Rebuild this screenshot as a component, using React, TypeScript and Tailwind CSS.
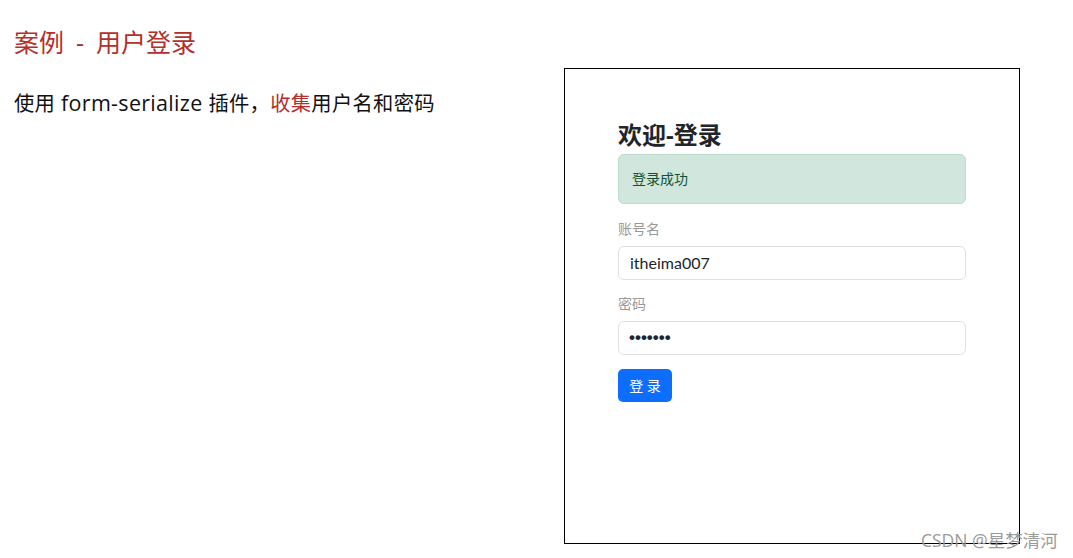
import React from "react";

const App = () => {
  return (
    <div className="relative h-[558px] w-[1073px] overflow-hidden bg-white font-['Open_Sans','Noto_Sans_CJK_SC',sans-serif]">
      <div className="flex">
        {/* left: task description */}
        <div className="w-[564px] shrink-0 pl-[14px]">
          <h1 className="pt-[26px] text-[25px] leading-[32px] text-[#b3302b]">
            案例<span className="mx-[12px]">-</span>用户登录
          </h1>
          <p className="mt-[31px] text-[20.3px] leading-[28px] tracking-[0.3px] text-[#111]">
            使用<span className="text-[21.5px]"> form-serialize </span>插件，<span className="text-[#b3302b]">收集</span>用户名和密码
          </p>
        </div>

        {/* right: login demo */}
        <div className="mt-[68px] h-[476px] w-[456px] border border-black px-[53px] pt-[51px]">
          <h3 className="text-[24px] font-bold leading-[29px] text-[#212529]">欢迎-登录</h3>
          <div className="mt-[5px] h-[50px] rounded-[6px] border border-[#badbcc] bg-[#d1e7dd] px-[13px] text-[14px] leading-[48px] text-[#0f5132]">
            登录成功
          </div>

          <div className="mt-[14px] text-[14px] leading-[21px] text-[#999]">账号名</div>
          <div className="mt-[7px] h-[34px] rounded-[6px] border border-[#dee2e6] px-[11px] font-['Lato','Noto_Sans_CJK_SC',sans-serif] text-[16px] leading-[32px] text-[#212529]">
            itheima007
          </div>

          <div className="mt-[13px] text-[14px] leading-[21px] text-[#999]">密码</div>
          <div className="mt-[7px] h-[34px] rounded-[6px] border border-[#dee2e6] px-[10px] font-['Liberation_Sans',sans-serif] text-[17px] font-bold leading-[32px] text-[#212529]">
            •••••••
          </div>

          <button className="mt-[14px] h-[33px] w-[54px] rounded-[5px] bg-[#0d6efd] text-[14px] text-white">
            登 录
          </button>
        </div>
      </div>

      {/* watermark */}
      <div className="absolute left-[921px] top-[529px] text-[17.5px] leading-[22px] text-[#9a9a9a]">
        CSDN @星梦清河
      </div>
    </div>
  );
};

export default App;
